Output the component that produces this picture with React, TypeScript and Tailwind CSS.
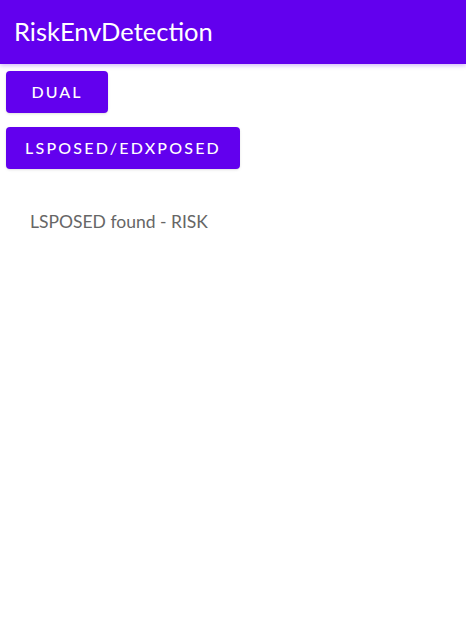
export default function App() {
  return (
    <div className="w-[466px] h-[634px] bg-white" style={{ fontFamily: '"Lato", "Noto Sans", sans-serif' }}>
      <div className="h-[64px] bg-[#6200ee] flex items-center pl-[14px] shadow-[0_2px_4px_rgba(98,0,238,0.25)]">
        <h1 className="text-white text-[25.5px] font-normal leading-none">RiskEnvDetection</h1>
      </div>
      <div className="flex flex-col items-start pl-[6px] pt-[7px] gap-[14px]">
        <button className="h-[42px] w-[102px] rounded-[4px] bg-[#6200ee] text-white text-[16px] font-medium tracking-[2px] shadow-sm">
          DUAL
        </button>
        <button className="h-[42px] w-[234px] rounded-[4px] bg-[#6200ee] text-white text-[16px] font-medium tracking-[2.2px] shadow-sm">
          LSPOSED/EDXPOSED
        </button>
      </div>
      <p className="pl-[30px] mt-[40px] text-[17.5px] text-[#666666]">LSPOSED found - RISK</p>
    </div>
  );
}
